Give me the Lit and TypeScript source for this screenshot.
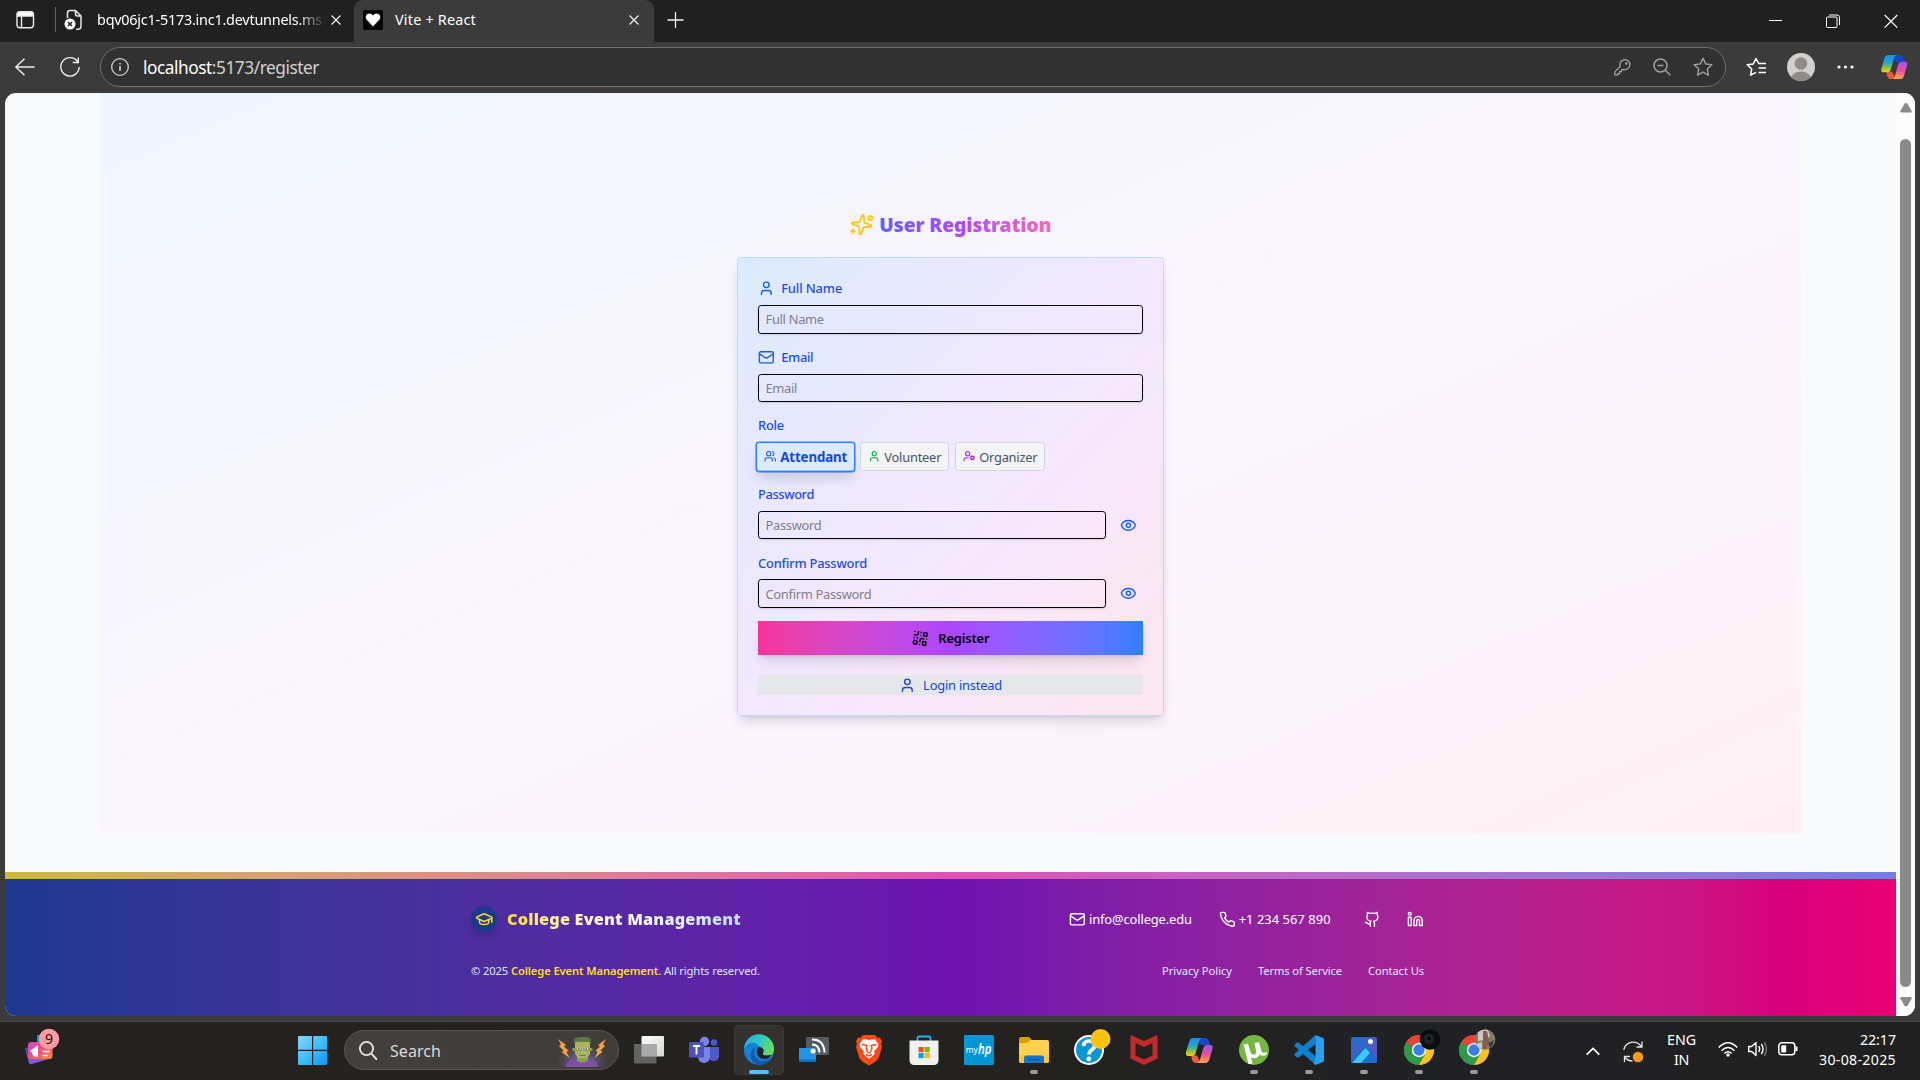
import { LitElement, html, css, svg, nothing } from "lit";
import { customElement, property } from "lit/decorators.js";

const FONT = css`"Noto Sans", "Open Sans", "Liberation Sans", sans-serif`;

/* Single line of text tracked so that it fills a given width. */
@customElement("fit-text")
class FitText extends LitElement {
  @property({ type: Number }) w = 0;
  static styles = css`
    :host { display: inline-block; white-space: pre; }
  `;
  render() {
    return html`<slot></slot>`;
  }
  firstUpdated() {
    this.fit();
    document.fonts.ready.then(() => this.fit());
  }
  fit() {
    if (!this.w) return;
    this.style.letterSpacing = "0px";
    this.style.width = "auto";
    const n = (this.textContent || "").length;
    const range = document.createRange();
    range.selectNodeContents(this);
    const natural = range.getBoundingClientRect().width;
    this.style.letterSpacing = `${(this.w - natural) / Math.max(1, n)}px`;
    this.style.width = `${this.w}px`;
  }
}

const ICONS: Record<string, unknown> = {
  sparkles: svg`<path d="M11.017 2.814a1 1 0 0 1 1.966 0l1.051 5.558a2 2 0 0 0 1.594 1.594l5.558 1.051a1 1 0 0 1 0 1.966l-5.558 1.051a2 2 0 0 0-1.594 1.594l-1.051 5.558a1 1 0 0 1-1.966 0l-1.051-5.558a2 2 0 0 0-1.594-1.594l-5.558-1.051a1 1 0 0 1 0-1.966l5.558-1.051a2 2 0 0 0 1.594-1.594z"/><path d="M20 2v4"/><path d="M22 4h-4"/><circle cx="4" cy="20" r="2"/>`,
  user: svg`<path d="M19 21v-2a4 4 0 0 0-4-4H9a4 4 0 0 0-4 4v2"/><circle cx="12" cy="7" r="4"/>`,
  mail: svg`<path d="m22 7-8.991 5.727a2 2 0 0 1-2.009 0L2 7"/><rect x="2" y="4" width="20" height="16" rx="2"/>`,
  users: svg`<path d="M16 21v-2a4 4 0 0 0-4-4H6a4 4 0 0 0-4 4v2"/><path d="M16 3.128a4 4 0 0 1 0 7.744"/><path d="M22 21v-2a4 4 0 0 0-3-3.87"/><circle cx="9" cy="7" r="4"/>`,
  cog: svg`<path d="M10 15H6a4 4 0 0 0-4 4v2"/><circle cx="9" cy="7" r="4"/><circle cx="18" cy="15" r="3"/><path d="m14.305 16.53.923-.382"/><path d="m15.228 13.852-.923-.383"/><path d="m16.852 12.228-.383-.923"/><path d="m16.852 17.772-.383.924"/><path d="m19.148 12.228.383-.923"/><path d="m19.53 18.696-.382-.924"/><path d="m20.772 13.852.924-.383"/><path d="m20.772 16.148.924.383"/>`,
  eye: svg`<path d="M2.062 12.348a1 1 0 0 1 0-.696 10.75 10.75 0 0 1 19.876 0 1 1 0 0 1 0 .696 10.75 10.75 0 0 1-19.876 0"/><circle cx="12" cy="12" r="3"/>`,
  qr: svg`<rect width="5" height="5" x="3" y="3" rx="1"/><rect width="5" height="5" x="16" y="3" rx="1"/><rect width="5" height="5" x="3" y="16" rx="1"/><path d="M21 16h-3a2 2 0 0 0-2 2v3"/><path d="M21 21v.01"/><path d="M12 7v3a2 2 0 0 1-2 2H7"/><path d="M3 12h.01"/><path d="M12 3h.01"/><path d="M12 16v.01"/><path d="M16 12h1"/><path d="M21 12v.01"/><path d="M12 21v-1"/>`,
  cap: svg`<path d="M21.42 10.922a1 1 0 0 0-.019-1.838L12.83 5.18a2 2 0 0 0-1.66 0L2.6 9.08a1 1 0 0 0 0 1.832l8.57 3.908a2 2 0 0 0 1.66 0z"/><path d="M22 10v6"/><path d="M6 12.5V16a6 3 0 0 0 12 0v-3.5"/>`,
  phone: svg`<path d="M22 16.92v3a2 2 0 0 1-2.18 2 19.79 19.79 0 0 1-8.63-3.07 19.5 19.5 0 0 1-6-6 19.79 19.79 0 0 1-3.07-8.67A2 2 0 0 1 4.11 2h3a2 2 0 0 1 2 1.72 12.84 12.84 0 0 0 .7 2.81 2 2 0 0 1-.45 2.11L8.09 9.91a16 16 0 0 0 6 6l1.27-1.27a2 2 0 0 1 2.11-.45 12.84 12.84 0 0 0 2.81.7A2 2 0 0 1 22 16.92z"/>`,
  github: svg`<path d="M15 22v-4a4.8 4.8 0 0 0-1-3.5c3 0 6-2 6-5.5.08-1.25-.27-2.48-1-3.5.28-1.15.28-2.35 0-3.5 0 0-1 0-3 1.5-2.64-.5-5.36-.5-8 0C6 2 5 2 5 2c-.3 1.15-.3 2.35 0 3.5A5.403 5.403 0 0 0 4 9c0 3.5 3 5.5 6 5.5-.39.49-.68 1.05-.85 1.65-.17.6-.22 1.23-.15 1.85v4"/><path d="M9 18c-4.51 2-5-2-7-2"/>`,
  linkedin: svg`<path d="M16 8a6 6 0 0 1 6 6v7h-4v-7a2 2 0 0 0-2-2 2 2 0 0 0-2 2v7h-4v-7a6 6 0 0 1 6-6z"/><rect width="4" height="12" x="2" y="9"/><circle cx="4" cy="4" r="2"/>`,
};

const icon = (name: string, cls: string) => html`<svg
  class="ico ${cls}" viewBox="0 0 24 24" fill="none" stroke="currentColor"
  stroke-width="2" stroke-linecap="round" stroke-linejoin="round">${ICONS[name]}</svg>`;

const copilot = (id: string) => svg`
  <defs>
    <linearGradient id="${id}a" x1="0" y1="0" x2="0" y2="1"><stop offset="0" stop-color="#1a8df0"/><stop offset=".45" stop-color="#22a8c8"/><stop offset=".7" stop-color="#7ac24a"/><stop offset="1" stop-color="#ffd20a"/></linearGradient>
    <linearGradient id="${id}b" x1=".3" y1="0" x2=".2" y2="1"><stop offset="0" stop-color="#9f52f2"/><stop offset=".5" stop-color="#ee4f90"/><stop offset="1" stop-color="#ffb050"/></linearGradient>
  </defs>
  <path d="M13 3h8q3 0 4 3.500l1 3.500h-6l-3 0z" fill="#1747c8"/>
  <path d="M7 20.500h6l4 7.500h-5q-3 0-4-3.500z" fill="#f4583a"/>
  <path d="M9 3h9q-2 0-3 3.500l-3.500 12q-.7 2.500-3.500 2.500H4.500q-3.500 0-2.500-4L5 7q1-4 4-4z" fill="url(#${id}a)"/>
  <path d="M21 28h-8q2 0 3-3.500l3.500-12q.7-2.500 3.500-2.500h3.500q3 0 2 4L25.500 24q-1 4-4.500 4z" fill="url(#${id}b)"/>`;

const chrome = svg`
  <circle cx="15" cy="15" r="15" fill="#e84335"/>
  <path d="M15 15 2 7.500A15 15 0 0 0 15 30l6.500-11.250z" fill="#2c9c4b"/>
  <path d="M15 15h0l6.500 3.750L15 30A15 15 0 0 0 28 7.500H15z" fill="#fcc31e"/>
  <path d="M2 7.500A15 15 0 0 1 28 7.500H15z" fill="#e84335"/>
  <circle cx="15" cy="15" r="7.200" fill="#fff"/><circle cx="15" cy="15" r="5.700" fill="#3b7ded"/>`;

const APPS: { name: string; mark?: string; art: unknown }[] = [
  { name: "task view", art: svg`<defs><linearGradient id="tv" x1="0" y1="0" x2="1" y2="1"><stop offset="0" stop-color="#fff"/><stop offset="1" stop-color="#d4d4d4"/></linearGradient></defs>
    <rect x="7.500" y="1" width="22.500" height="20.500" rx="1" fill="url(#tv)"/><rect x="0" y="9" width="22.500" height="19.500" rx="1" fill="#6a6a6a" opacity=".9"/><rect x="7.500" y="9" width="15" height="12.500" fill="#a9a9a9"/>` },
  { name: "teams", art: svg`<circle cx="25" cy="7.500" r="3.200" fill="#5059c9"/><path d="M19 12h11v9q0 5-5 5t-6-5z" fill="#5059c9"/><circle cx="15.500" cy="6.500" r="4.700" fill="#7b83eb"/><path d="M9 12h12v9q0 7-6 7t-6-7z" fill="#7b83eb"/><rect x="0" y="7" width="15" height="15.500" rx="1.500" fill="#4b53bc"/><path d="M4 11h7M7.500 11v8.500" stroke="#fff" stroke-width="1.900"/>` },
  { name: "edge", mark: "active", art: svg`<defs><linearGradient id="eg" x1="0" y1=".3" x2="1" y2=".6"><stop offset="0" stop-color="#2aa9e8"/><stop offset=".5" stop-color="#30c9c4"/><stop offset="1" stop-color="#6be052"/></linearGradient></defs>
    <circle cx="15" cy="15" r="15" fill="#1580d8"/>
    <path d="M0 14A15 15 0 0 1 30 14.500q0 6-6.500 6-5 0-5-2.500 1.500-1 1-3.500-.8-3-4.500-3.500Q12 6.500 7 8 1.500 10 0 14z" fill="url(#eg)"/>
    <path d="M12 12q-3 3-1.500 8.500 3 6.500 10 5.500 3.500-.6 6.500-3.500Q22.500 30 15 30 7 28 6.500 20.500 7 13.500 12 12z" fill="#1257a8"/>
    <path d="M14 12.200q3.500-.7 5.500 2.500.7 2-1 4 .5 1.800 4 1.800l4.500-.5q-2 4-7 4-7-1-7.500-7 .2-3 1.500-4.800z" fill="#25211f"/>` },
  { name: "cast", art: svg`<rect x="7" y="2" width="23" height="18" rx="1" fill="#545b61"/><rect x="0" y="13" width="17" height="14" rx="1" fill="#2395e4"/><rect x="0" y="24.500" width="17" height="2.500" fill="#176db8"/><circle cx="14" cy="16" r="2.500" fill="#fff"/><path d="M13 9.500q7 0 7.500 8M13 4.500q12 0 12.500 13" fill="none" stroke="#fff" stroke-width="2"/>` },
  { name: "brave", art: svg`<path d="M9 0h12l3 3 2-.5 2 4-1 2.500 1 3-3.500 11.500L21 27l-6 3.500L9 27l-3.500-3.500L2 12l1-3-1-2.500 2-4 2 .5z" fill="#fb4a14"/><path d="m15 5 3-.8h3l3.500 5-.8 3-3.700 4 .8 2.500-2 2-3.800 3-3.800-3-2-2 .8-2.500-3.700-4-.8-3 3.500-5h3z" fill="#fff"/><path d="m7.500 9.500 5.500 1-1 2.500 1.500 4L15 18l1.500-1 1.500-4-1-2.500 5.500-1M12 19.500l3 1.500 3-1.500" fill="none" stroke="#fb4a14" stroke-width="1.400"/>` },
  { name: "store", art: svg`<path d="M8.500 7V2.800q0-1.300 1.300-1.300h10.400q1.300 0 1.300 1.300V7" fill="none" stroke="#2bb1ea" stroke-width="1.800"/><path d="M.5 5.500h29V25q0 5-5 5h-19q-5 0-5-5z" fill="#f1f1f1"/><rect x="9.500" y="12" width="5.200" height="5.200" fill="#f25022"/><rect x="15.600" y="12" width="5.200" height="5.200" fill="#7fba00"/><rect x="9.500" y="18" width="5.200" height="5.200" fill="#00a4ef"/><rect x="15.600" y="18" width="5.200" height="5.200" fill="#ffb900"/>` },
  { name: "hp", art: svg`<rect width="30" height="30" rx="1" fill="#0096d6"/><text x="1.800" y="18" font-size="9.500" fill="#fff" textLength="12" lengthAdjust="spacingAndGlyphs">my</text><text x="14" y="18.500" font-size="14" font-style="italic" font-weight="600" fill="#fff" textLength="13.500" lengthAdjust="spacingAndGlyphs">hp</text>` },
  { name: "files", mark: "open", art: svg`<path d="M0 4q0-2 2-2h7q2 0 3 2l1 2-3 6H0z" fill="#dd9d00"/><path d="M11 5h17q2 0 2 2v19q0 2-2 2H2q-2 0-2-2V8h8q1.500 0 3-3z" fill="#fdd04e"/><path d="M0 20h30v6q0 2-2 2H2q-2 0-2-2z" fill="#fcc734"/><path d="M5 28v-5q0-2.500 2.500-2.500h15Q25 20.500 25 23v5z" fill="#1474c9"/><path d="M9 24.500h12" stroke="#0a4f94" stroke-width="1.200"/>` },
  { name: "help", art: svg`<circle cx="15" cy="15" r="14" fill="#0a98d5" stroke="#fff" stroke-width="2"/><path d="M9.500 11q.5-5 5.500-5t5.500 4.500q0 2.500-2.700 4.300T15 19.500" fill="none" stroke="#fff" stroke-width="3.600"/><circle cx="14.800" cy="24" r="2.400" fill="#fff"/><circle cx="26.500" cy="4" r="10" fill="#ffc20e"/>` },
  { name: "mcafee", art: svg`<path d="m1.500 0 13.500 6L28.500 0v23.500L15 30 1.500 23.500z" fill="#c22a2c"/><path d="m6.500 8 8.500 4 8.500-4v12.500L15 24.500l-8.500-4z" fill="#242322"/>` },
  { name: "copilot", art: copilot("t") },
  { name: "torrent", mark: "open", art: svg`<circle cx="15" cy="15" r="15" fill="#74b843"/><path d="M4.500 9.500 9 8.800l2.500 8.500q1 3 3.700 2.300 2.500-.8 2-3.500L15.500 8l4.500-.8 2.500 9q.5 2 2.300 1.500l3-.8v2.500q-4.500 2.800-7 .2-2 3.500-5.500 3.700-2 0-3.300-1l1.500 6.500-4 .2z" fill="#fff"/>` },
  { name: "code", mark: "open", art: svg`<path d="M21.500 0v9L4.500 22.500 3 22.600.4 20.300v-1.300z" fill="#0e80cf"/><path d="M21.500 30v-9L4.500 7.500 3 7.400.4 9.700V11z" fill="#0e80cf"/><path d="m21.500 0 8.500 3.500v23L21.500 30 20 28.500l1.500-6.500V8z" fill="#2aa0f2"/>` },
  { name: "photos", mark: "open", art: svg`<defs><linearGradient id="ph" x1="0" y1="0" x2="1" y2="1"><stop offset="0" stop-color="#1d6fd6"/><stop offset="1" stop-color="#6a4fb5"/></linearGradient></defs><rect x="2" y="2" width="26" height="26" rx="2" fill="url(#ph)"/><path d="m2 26 13-13.500q1.500-1.500 3 0L28 23v3q0 2-2 2H4z" fill="#1c6cd0"/><path d="m3.500 27.500 12-13.500q1-1 2 0l3.500 4-9 10H4z" fill="#3cc8f4"/><circle cx="21.500" cy="6.500" r="2.500" fill="#fff"/>` },
  { name: "chrome", mark: "open", art: svg`${chrome}<circle cx="26" cy="4.500" r="10.300" fill="#0b0c0e"/><circle cx="25" cy="4" r="5.500" fill="#1d2126"/><circle cx="25" cy="3.500" r="2.800" fill="#07080a" stroke="#2c3138"/>` },
  { name: "chrome", mark: "open", art: svg`${chrome}<circle cx="26" cy="4.500" r="10.300" fill="#7a8068"/><path d="M19-3q5-3 10-2l2 6-4 4-8 1zM17 9l6-2v7q-5-1-6-5z" fill="#c9c7c0"/><path d="M24-4h4l2 10-3 8h-3z" fill="#8a5a50"/><path d="m29 8 6-3q-1 6-4 8z" fill="#3c4236"/>` },
];

@customElement("app-root")
class AppRoot extends LitElement {
  static styles = css`
    :host { display: block; width: 1920px; height: 1080px; overflow: hidden; font-family: ${FONT}; }
    * { box-sizing: border-box; }
    .screen { display: flex; flex-direction: column; height: 1080px; background: #3b3b3b; }
    svg { display: block; flex: none; overflow: visible; }

    .tabs { display: flex; height: 42px; background: #202020; color: #fff; font-size: 14.400px; }
    .tabs .lead { width: 56px; padding: 10px 0 0 16px; }
    .tab1 { display: flex; align-items: center; width: 298px; padding: 0 13px 3px 7px; border-left: 1px solid transparent; }
    .tab1::before { content: ""; width: 1px; height: 25px; background: #666; margin-left: -9px; margin-right: 8px; }
    .tab1 .label { width: 225px; overflow: hidden; margin-left: 14px; -webkit-mask-image: linear-gradient(90deg, #000 200px, transparent 229px); }
    .tab2 { display: flex; align-items: center; width: 300px; padding: 0 15px 3px 9px; background: #3b3b3b; border-radius: 9px 9px 0 0; }
    .tab2 fit-text { margin-left: 12px; margin-right: auto; }
    .plus { margin: 12px 0 0 13px; }
    .winbtns { display: flex; margin-left: auto; padding: 14px 22px 0 0; gap: 44px; }

    .bar { display: flex; align-items: center; height: 51px; padding: 0 11px 1px 15px; color: #fff; }
    .bar .reload { margin-left: 25px; }
    .address { display: flex; align-items: center; width: 1626px; height: 40px; margin-left: 20px; padding: 0 12px 0 10px; border: 1px solid #6d6d6d; border-radius: 20px; background: #313131; font-size: 17.300px; }
    .address .url { margin-left: 14px; margin-right: auto; }
    .address .dim { color: #d2d2d2; }
    .address .tools { display: flex; gap: 22px; align-items: center; }
    .favs { margin-left: 20px; } .avatar { margin-left: 21px; } .more { margin-left: 22px; } .pilot { margin-left: 24px; }

    .frame { display: flex; width: 1910px; height: 923px; margin-left: 5px; border-radius: 11px; overflow: hidden; background: #f9fafb; }
    .page { width: 1891px; }
    .scroll { display: flex; flex-direction: column; align-items: center; width: 19px; background: #fcfcfc; padding: 10px 0 9px 0; }
    .thumb { width: 11px; height: 848px; margin: 26px 0 auto; border-radius: 6px; background: #8b8b8b; }

    .panel { width: 1701px; height: 740px; margin-left: 95px; padding-top: 117px; background: linear-gradient(to bottom right in oklab, #eff6ff, #faf5ff 50%, #fff0f4); }
    .title { display: flex; align-items: center; width: 427px; height: 30px; margin: 0 auto; padding-left: 113px; color: #ffc814; }
    .title .name { margin: -1px 0 0 6px; font-size: 19.400px; font-weight: 900; line-height: 28px; color: transparent; background: linear-gradient(90deg in oklab, #615fff, #ad46ff 50%, #ff63b4); -webkit-background-clip: text; background-clip: text; }
    .i23 { width: 23.300px; height: 23.300px; }
    .spin { transform: rotate(188deg); }
    .i17 { width: 16.700px; height: 16.700px; }
    .i13 { width: 12.500px; height: 12.500px; }

    .card { width: 427px; height: 459px; margin: 17px auto 0; padding: 20px; border: 1px solid #bedbff; border-radius: 3.300px; background: linear-gradient(to bottom right in oklab, #dbeafe, #f3e8ff 50%, #fde6ef); box-shadow: 0 8px 13px -3px rgb(0 0 0 / 0.13), 0 3px 5px -3px rgb(0 0 0 / 0.12); color: #1447e6; font-size: 12.900px; }
    .row { height: 68.600px; }
    .lbl { display: flex; align-items: center; height: 20px; padding-top: 0.500px; margin-bottom: 7px; gap: 6.500px; font-weight: 500; color: #1d4ee8; }
    .lbl svg { color: #155dfc; }
    .line { display: flex; align-items: center; justify-content: space-between; }
    input { display: block; width: 100%; height: 28.500px; padding: 0 6.500px; border: 1px solid #000; border-radius: 3.300px; background: transparent; box-shadow: 0 1px 2px rgb(0 0 0 / 0.12); font: 400 12.900px ${FONT}; letter-spacing: -0.300px; outline: none; }
    input::placeholder { color: #7d7f8c; opacity: 1; }
    .pw input { width: 348px; }
    .pw svg { color: #155dfc; margin-right: 6px; }
    .roles { display: flex; align-items: center; height: 29px; gap: 6px; margin-left: -2px; }
    .role { display: flex; align-items: center; justify-content: center; gap: 4px; width: 89px; height: 29px; border: 1px solid #d1d5dc; border-radius: 3.300px; background: #f3f4f6; color: #4a5565; }
    .role.on { width: 99px; height: 30px; margin-right: -1px; border: 1px solid #2b7fff; background: #dbeafe; color: #1447e6; font-weight: 700; box-shadow: 0 0 0 0.500px #2b7fff, inset 0 -1px 0 #93c0ff, 0 8px 13px -3px rgb(0 0 0 / 0.16); font-size: 13.300px; }
    .role.org { width: 90px; }
    .blue { color: #155dfc; } .green { color: #00b04a; } .purple { color: #a51fff; }
    .register { display: flex; align-items: center; justify-content: center; height: 34px; gap: 10px; background: linear-gradient(90deg in oklab, #f6339a, #ad46ff 50%, #2b7fff); color: #000; font-weight: 600; font-size: 12.900px; box-shadow: 0 8px 13px -3px rgb(0 0 0 / 0.14), 0 3px 5px -3px rgb(0 0 0 / 0.12); }
    .login { display: flex; align-items: center; justify-content: center; height: 20px; gap: 7.500px; margin-top: 20px; background: #e5e7eb; }

    .foot { height: 144px; margin-top: 39px; background: linear-gradient(90deg in oklab, #1c398e, #6e11b0 50%, #d8007c 94%, #e90074); color: #fff; }
    .stripe { height: 7px; background: linear-gradient(90deg in oklab, #cdbb38, #de51b4 50%, #6f80e3); }
    .inner { width: 953px; margin-left: 466px; }
    .r1, .r2 { display: flex; align-items: center; }
    .r1 { height: 26px; margin-top: 27px; font-size: 12.900px; }
    .r2 { height: 20px; margin-top: 28px; font-size: 11.200px; color: #dbeafe; }
    .logo { display: grid; place-items: center; width: 26px; height: 26px; border-radius: 50%; background: #1c398e; color: #fddb20; box-shadow: 0 5px 8px rgb(0 0 0 / 0.12); }
    .i18 { width: 18.300px; height: 18.300px; }
    .brand { margin: 0 auto 0 10px; font-size: 16.300px; font-weight: 900; line-height: 24px; color: transparent; background: linear-gradient(90deg in oklab, #ffdf20, #fff 50%, #bedbff); -webkit-background-clip: text; background-clip: text; }
    .r1 .mail { margin-right: 3px; } .r1 .phone { margin: 0 3px 0 27px; }
    .r1 .github { margin-left: 33px; } .r1 .linkedin { margin-left: 27px; }
    .gold { color: #ffdf20; font-weight: 600; }
    .push { margin-left: auto; } .r2 .nx { margin-left: 26px; }

    .task { display: flex; align-items: flex-start; height: 59px; margin-top: 5px; border-top: 1px solid #484746; background: linear-gradient(90deg, #24211f, #25221e 22%, #232220 55%, #202124 75%, #202020); color: #fff; }
    .news { width: 44px; margin: 6px 0 0 22px; }
    .start { margin: 14px 0 0 232px; }
    .search { display: flex; align-items: center; width: 275px; height: 40px; margin: 8px 0 0 17px; padding: 0 11px 0 14px; border: 1px solid #585552; border-radius: 20px; background: linear-gradient(90deg, #42403d, #403d3b); color: #dcdad8; font-size: 16px; }
    .search fit-text { margin: 1px auto 0 13px; }
    .apps { display: flex; margin-left: 5px; gap: 5px; padding-top: 3px; }
    .app { display: flex; flex-direction: column; align-items: center; width: 50px; height: 50px; padding-top: 10px; border-radius: 5px; }
    .app.active { background: #34312f; box-shadow: inset 0 0 0 1px #3d3a38; }
    .dot { width: 8px; height: 4px; margin-top: 5px; border-radius: 2px; background: #9b9a99; }
    .active .dot { width: 20px; background: #4cc2ff; }
    .tray { display: flex; margin-left: auto; padding-right: 24px; font-size: 14.200px; line-height: 20px; }
    .tray .stack { display: flex; flex-direction: column; align-items: center; padding-top: 8px; }
    .tray .lang { margin-left: 23px; }
    .tray .clock { align-items: flex-end; margin-left: 21px; }
    .tray svg { margin-top: 19px; }
    .tray .up { margin-top: 25px; } .tray .sync { margin-left: 23px; }
    .tray .wifi { margin-left: 22px; } .tray .vol, .tray .bat { margin-left: 10px; }
  `;

  render() {
    return html`<div class="screen">
      ${this.tabStrip()}${this.toolbar()}
      <div class="frame">
        <div class="page">${this.form()}${this.footer()}</div>
        <div class="scroll">
          <svg width="12" height="10"><path d="M6 0q1 0 1.500.8L11.700 8q.5 1.500-1 1.500H1.300Q-.2 9.500.3 8L4.500.8Q5 0 6 0z" fill="#8b8b8b"/></svg>
          <div class="thumb"></div>
          <svg width="12" height="10"><path d="M6 9.500q1 0 1.500-.8L11.700 1.500q.5-1.500-1-1.500H1.300Q-.2 0 .3 1.500L4.500 8.700Q5 9.500 6 9.500z" fill="#8b8b8b"/></svg>
        </div>
      </div>
      ${this.taskbar()}
    </div>`;
  }

  cross(cls = "") {
    return html`<svg class=${cls} width="10" height="10" stroke="#e8e8e8" stroke-width="1.400"><path d="m.5.500 9 9m0-9-9 9"/></svg>`;
  }

  tabStrip() {
    return html`<div class="tabs">
      <div class="lead"><svg width="19" height="19" fill="none" stroke="#ececec" stroke-width="1.400"><rect x="1" y="1.700" width="16.500" height="16" rx="3"/><path d="M5.500 6v11.500"/><path d="M1.500 6V4.500Q1.500 2 4 2h10.500Q17 2 17 4.500V6z" fill="#fff"/></svg></div>
      <div class="tab1">
        <svg width="19" height="22" fill="none" stroke="#e6e6e6" stroke-width="1.500"><path d="M3.500 9V4q0-2.500 2.500-2.500h5.500L17 7v10.500q0 2.700-2.700 2.700H12M11.500 1.500V5q0 2 2 2H17"/><circle cx="6" cy="15" r="5.500" fill="#fff" stroke="none"/><path d="m4 13 4 4m0-4-4 4" stroke="#202020"/></svg>
        <div class="label"><fit-text w="225">bqv06jc1-5173.inc1.devtunnels.ms</fit-text></div>
        ${this.cross("push")}
      </div>
      <div class="tab2">
        <svg width="20" height="20"><rect width="20" height="20" rx="2" fill="#000"/><path d="M10 16.500 3.500 9.500Q1.500 6 4.500 4 8 2.500 10 5.500 12 2.500 15.500 4q3 2 1 5.500z" fill="#fff"/></svg>
        <fit-text w="81">Vite + React</fit-text>
        ${this.cross()}
      </div>
      <svg class="plus" width="17" height="17" stroke="#f2f2f2" stroke-width="1.300"><path d="M8.500 0v16M.5 8h16"/></svg>
      <div class="winbtns">
        <svg width="13" height="14" stroke="#fff"><path d="M0 6.500h13"/></svg>
        <svg width="14" height="14" fill="none" stroke="#fff"><rect x=".5" y="3" width="10.500" height="10.500" rx="1"/><path d="M3 1h8q2.500 0 2.500 2.500V11"/></svg>
        <svg width="14" height="14" stroke="#fff" stroke-width="1.200"><path d="m.7 1 12.600 12.600m0-12.600L.7 13.600"/></svg>
      </div>
    </div>`;
  }

  toolbar() {
    const star = "M10 1.200l2.700 5.700 6.100.8-4.500 4.300 1.100 6.200L10 15.200l-5.400 3 1.100-6.200L1.200 7.700l6.100-.8z";
    return html`<div class="bar">
      <svg width="20" height="18" fill="none" stroke="#eee" stroke-width="1.400"><path d="M19.500 9H.8M9.500.7.8 9l8.700 8.300"/></svg>
      <svg class="reload" width="20" height="20" fill="none" stroke="#eee" stroke-width="1.400"><path d="M17.500 4.500A9.200 9.200 0 1 0 19.200 10M18.300.5v5h-5.500"/></svg>
      <div class="address">
        <svg width="18" height="18" fill="none" stroke="#cfcfcf" stroke-width="1.300"><circle cx="9" cy="9" r="8.300"/><path d="M9 8v5M9 5v1.500" stroke-width="1.600"/></svg>
        <fit-text class="url" w="176">localhost<span class="dim">:5173/register</span></fit-text>
        <div class="tools">
          <svg width="17" height="17" fill="none" stroke="#a0a0a0" stroke-width="1.300"><path d="M6.200 7.500A5 5 0 1 1 9.500 10.500l-2 .3v1.900H5.600v1.900H3.800v1.300H.8v-3z"/><circle cx="12.300" cy="4.600" r=".6"/></svg>
          <svg width="18" height="18" fill="none" stroke="#a0a0a0" stroke-width="1.500"><circle cx="7.500" cy="7.500" r="6.500"/><path d="M4.500 7.500h6M12.300 12.300l5 5"/></svg>
          <svg width="20" height="20" fill="none" stroke="#a0a0a0" stroke-width="1.400" stroke-linejoin="round"><path d="${star}"/></svg>
        </div>
      </div>
      <svg class="favs" width="20" height="20" fill="none" stroke="#fff" stroke-width="1.500" stroke-linejoin="round"><path d="M13 7 10 1.500 7.300 6.900l-6.100.8L5.700 12l-1.100 6.200L10 15.300M12.500 6.500H20M12.500 11H20M12.500 15.500H20"/></svg>
      <svg class="avatar" width="28" height="28"><defs><clipPath id="av"><circle cx="14" cy="14" r="14"/></clipPath></defs><circle cx="14" cy="14" r="14" fill="#d2d0ce"/><g clip-path="url(#av)" fill="#8f8b88"><circle cx="14" cy="10.500" r="6.300"/><ellipse cx="14" cy="27" rx="10.500" ry="8.500"/></g></svg>
      <svg class="more" width="18" height="4" fill="#fff"><circle cx="2" cy="2" r="1.600"/><circle cx="8.500" cy="2" r="1.600"/><circle cx="15" cy="2" r="1.600"/></svg>
      <svg class="pilot" width="30" height="30" viewBox="0 0 30 31">${copilot("b")}</svg>
    </div>`;
  }

  field(label: string, w: number, ic?: string) {
    return html`<div class="row">
      <div class="lbl">${ic ? icon(ic, "i17") : nothing}<fit-text w=${w}>${label}</fit-text></div>
      <input placeholder=${label} />
    </div>`;
  }

  password(label: string, w: number) {
    return html`<div class="row pw">
      <div class="lbl"><fit-text w=${w}>${label}</fit-text></div>
      <div class="line"><input placeholder=${label} />${icon("eye", "i17")}</div>
    </div>`;
  }

  form() {
    return html`<div class="panel">
      <div class="title">${icon("sparkles", "i23 spin")}<fit-text class="name" w="172">User Registration</fit-text></div>
      <div class="card">
        ${this.field("Full Name", 61, "user")}${this.field("Email", 32, "mail")}
        <div class="row">
          <div class="lbl"><fit-text w="26">Role</fit-text></div>
          <div class="roles">
            <div class="role on">${icon("users", "i13 blue")}<fit-text w="67">Attendant</fit-text></div>
            <div class="role">${icon("user", "i13 green")}<fit-text w="57">Volunteer</fit-text></div>
            <div class="role org">${icon("cog", "i13 purple")}<fit-text w="58">Organizer</fit-text></div>
          </div>
        </div>
        ${this.password("Password", 56)}${this.password("Confirm Password", 109)}
        <div class="register">${icon("qr", "i17 spin")}<fit-text w="51">Register</fit-text></div>
        <div class="login">${icon("user", "i17")}<fit-text w="79">Login instead</fit-text></div>
      </div>
    </div>`;
  }

  footer() {
    return html`<div class="foot">
      <div class="stripe"></div>
      <div class="inner">
        <div class="r1">
          <div class="logo">${icon("cap", "i18")}</div>
          <fit-text class="brand" w="234">College Event Management</fit-text>
          ${icon("mail", "i17 mail")}<fit-text w="103">info@college.edu</fit-text>
          ${icon("phone", "i17 phone")}<fit-text w="92">+1 234 567 890</fit-text>
          ${icon("github", "i17 github")}${icon("linkedin", "i17 linkedin")}
        </div>
        <div class="r2">
          <fit-text w="289">© 2025 <span class="gold">College Event Management</span>. All rights reserved.</fit-text>
          <fit-text class="push" w="70">Privacy Policy</fit-text>
          <fit-text class="nx" w="84">Terms of Service</fit-text>
          <fit-text class="nx" w="56">Contact Us</fit-text>
        </div>
      </div>
    </div>`;
  }

  taskbar() {
    return html`<div class="task">
      <svg class="news" width="44" height="38" viewBox="0 0 44 38"><defs><linearGradient id="nw" x1="0" y1="0" x2="1" y2="1"><stop offset="0" stop-color="#c84bc8"/><stop offset=".5" stop-color="#f4517d"/><stop offset="1" stop-color="#ff8a3c"/></linearGradient></defs>
        <path d="M15 7h10v8H15z" fill="#1493d8"/><path d="m3 20 4 15q1 2 3 1l17-5v-6z" fill="#8358e8"/><path d="m3 20 3-1v9z" fill="#2a52c8"/>
        <rect x="6" y="14" width="24.500" height="17" rx="3" fill="url(#nw)"/><path d="m8 23 8-6v12z" fill="#fff"/><path d="m10 24 5 1v4l-4-1z" fill="#fff"/><path d="M20.500 23.500h7M20.500 27.500h5" stroke="#fff" stroke-width="1.600"/>
        <circle cx="27" cy="11" r="10.300" fill="#ff99a4"/><text x="27" y="16" font-size="14" text-anchor="middle" fill="#111">9</text></svg>
      <svg class="start" width="29" height="29"><defs><linearGradient id="wn" x1="0" y1="0" x2="1" y2="1"><stop offset="0" stop-color="#84d8fb"/><stop offset=".5" stop-color="#3fc0fb"/><stop offset="1" stop-color="#0994f6"/></linearGradient></defs><path d="M1 0h13v13.700H0V1q0-1 1-1zM15.200 0H28q1 0 1 1v12.700H15.200zM0 15h14v14H1q-1 0-1-1zM15.200 15H29v13q0 1-1 1H15.200z" fill="url(#wn)"/></svg>
      <div class="search">
        <svg width="18" height="19" fill="none" stroke="#e4e2e0" stroke-width="1.900"><circle cx="7.500" cy="7.500" r="6.600"/><path d="m12.300 12.700 5 5.300" stroke-linecap="round"/></svg>
        <fit-text w="51">Search</fit-text>
        <svg width="50" height="34" viewBox="0 0 50 34"><defs><radialGradient id="gl"><stop offset="0" stop-color="#8872c8" stop-opacity=".9"/><stop offset="1" stop-color="#6a5a90" stop-opacity="0"/></radialGradient><clipPath id="gc"><path d="M0 0h50v34H0z"/></clipPath></defs>
          <g clip-path="url(#gc)"><ellipse cx="25" cy="28" rx="25" ry="17" fill="url(#gl)"/></g>
          <path d="M9 34v-2q1-5 9-6h14q8 1 9 6v2z" fill="#7c4fa0"/><path d="M20 22h11v6q-5 3-11 0z" fill="#84a04a"/><path d="M18 9h15v12l-3.500 4.500h-8L18 21z" fill="#a9b45c"/><path d="M17.500 5q8-2 16 0l.3 6-2-2H19l-1.800 2z" fill="#5c7a48"/><rect x="15.500" y="15" width="20" height="3" rx="1" fill="#8ca04a"/><path d="M20 15.500h3.500M27.500 15.500H31" stroke="#e8e0e8" stroke-width="2"/><path d="M21 15.500h1.500M28.500 15.500H30" stroke="#a0405a" stroke-width="2"/><path d="M25.500 15v5" stroke="#7cc0b8" stroke-width="2"/><path d="M22.500 22.500h6" stroke="#6d7d48"/>
          <path d="m1 6 8 6-2 1.500 4.500 4-2 1.500 3 6-8-6 2-1.500L2 13l2-1.500zM49 6l-8 6 2 1.500-4.500 4 2 1.500-3 6 8-6-2-1.500L48 13l-2-1.500z" fill="#f5a03a"/></svg>
      </div>
      <div class="apps">
        ${APPS.map((a) => html`<div class="app ${a.mark ?? ""}"><svg width="30" height="30" viewBox="0 0 30 30">${a.art}</svg>${a.mark ? html`<div class="dot"></div>` : nothing}</div>`)}
      </div>
      <div class="tray">
        <svg class="up" width="14" height="9" fill="none" stroke="#fff" stroke-width="1.700"><path d="m.7 7.700 6.300-6.200 6.300 6.200"/></svg>
        <svg class="sync" width="21" height="21" fill="none" stroke="#e6e6e6" stroke-width="1.300"><path d="M.8 9Q2 2.500 9 1.200 15 .8 18.300 5.500M19 .5v5.500h-5.500M1.500 21v-5.500H7M1.500 16q3 4 8 4"/><circle cx="15" cy="16" r="5.200" fill="#ff9a0a" stroke="none"/></svg>
        <div class="stack lang"><fit-text w="29">ENG</fit-text><fit-text w="15">IN</fit-text></div>
        <svg class="wifi" width="20" height="16" fill="none" stroke="#fff" stroke-width="1.500"><path d="M.7 6Q10-3.500 19.300 6M3.500 9.200q6.500-6.400 13 0M6.400 12q3.600-3.400 7.200 0" transform="translate(0 .5)"/><circle cx="10" cy="14" r="1.700" fill="#fff" stroke="none"/></svg>
        <svg class="vol" width="20" height="16" fill="none" stroke="#fff" stroke-width="1.400"><path d="M.7 5.500h3L8 1.500v13l-4.300-4h-3z" stroke-linejoin="round"/><path d="M10.700 5.200q2 2.800 0 5.600M13.300 3q3.500 5 0 10"/><path d="M16.200 1q4.500 7 0 14" stroke="#777"/></svg>
        <svg class="bat" width="20" height="15" fill="none" stroke="#fff" stroke-width="1.500"><rect x=".8" y="1.800" width="16" height="12" rx="3"/><rect x="3.200" y="4.200" width="5" height="7.200" rx="1" fill="#fff" stroke="none"/><path d="M18.500 5.500v4.500" stroke-width="2"/></svg>
        <div class="stack clock"><fit-text w="36">22:17</fit-text><fit-text w="77">30-08-2025</fit-text></div>
      </div>
    </div>`;
  }
}
